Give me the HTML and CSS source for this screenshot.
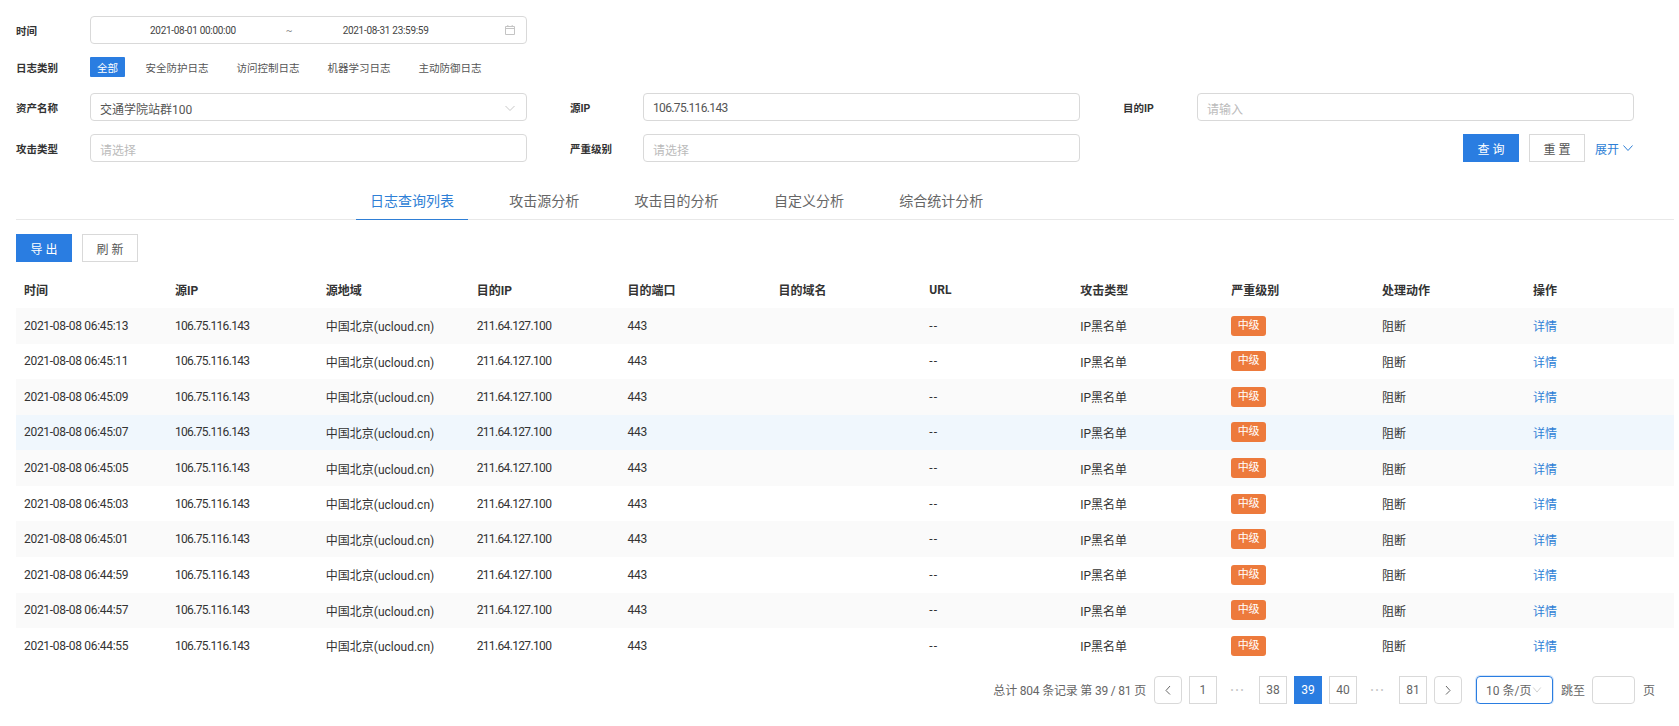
FILE: index.html
```html
<!DOCTYPE html>
<html lang="zh-CN">
<head>
    <meta charset="UTF-8">
    <title>日志查询</title>
    <link rel="stylesheet" href="styles.css">
</head>
<body>
<div class="page">
    <div class="filter-row row-time">
        <span class="label">时间</span>
        <div class="box date-box">
            <span class="date-val">2021-08-01 00:00:00</span>
            <span class="date-sep">~</span>
            <span class="date-val">2021-08-31 23:59:59</span>
            <svg class="date-icon" viewBox="0 0 12 12" width="12" height="12"><path d="M1.5 2.5h9v8h-9zM1.5 4.5h9M3.8 1v2M8.2 1v2" fill="none" stroke="#c4c4c4" stroke-width="1"/></svg>
        </div>
    </div>
    <div class="filter-row row-type">
        <span class="label">日志类别</span>
        <span class="type-item active">全部</span>
        <span class="type-item">安全防护日志</span>
        <span class="type-item">访问控制日志</span>
        <span class="type-item">机器学习日志</span>
        <span class="type-item">主动防御日志</span>
    </div>
    <div class="filter-grid">
        <span class="label">资产名称</span>
        <div class="box select-box">交通学院站群100
            <svg class="chevron" viewBox="0 0 12 12" width="12" height="12"><path d="M1.5 4l4.500 4.500L10.500 4" fill="none" stroke="#c8c8c8" stroke-width="1"/></svg>
        </div>
        <span class="label col-two">源IP</span>
        <div class="box ip-val">106.75.116.143</div>
        <span class="label col-three">目的IP</span>
        <div class="box holder">请输入</div>

        <span class="label">攻击类型</span>
        <div class="box holder">请选择</div>
        <span class="label col-two">严重级别</span>
        <div class="box holder">请选择</div>
        <div class="actions">
            <button class="btn primary">查 询</button>
            <button class="btn">重 置</button>
            <a class="expand">展开<svg viewBox="0 0 12 12" width="12" height="12"><path d="M1.500 3.500L6 8.500l4.500-5" fill="none" stroke="#2f7fd6" stroke-width="1"/></svg></a>
        </div>
    </div>

    <div class="tabs">
        <span class="tab active">日志查询列表</span>
        <span class="tab">攻击源分析</span>
        <span class="tab">攻击目的分析</span>
        <span class="tab">自定义分析</span>
        <span class="tab">综合统计分析</span>
    </div>

    <div class="toolbar">
        <button class="btn primary">导 出</button>
        <button class="btn">刷 新</button>
    </div>

    <table class="log-table">
        <thead>
        <tr><th>时间</th><th>源IP</th><th>源地域</th><th>目的IP</th><th>目的端口</th><th>目的域名</th><th>URL</th><th>攻击类型</th><th>严重级别</th><th>处理动作</th><th>操作</th></tr>
        </thead>
        <tbody>
        <tr><td class="time">2021-08-08 06:45:13</td><td class="ip-val">106.75.116.143</td><td>中国北京(ucloud.cn)</td><td class="ip-val">211.64.127.100</td><td class="time">443</td><td></td><td class="dash">--</td><td>IP黑名单</td><td><span class="tag">中级</span></td><td>阻断</td><td><a class="link">详情</a></td></tr>
        <tr><td class="time">2021-08-08 06:45:11</td><td class="ip-val">106.75.116.143</td><td>中国北京(ucloud.cn)</td><td class="ip-val">211.64.127.100</td><td class="time">443</td><td></td><td class="dash">--</td><td>IP黑名单</td><td><span class="tag">中级</span></td><td>阻断</td><td><a class="link">详情</a></td></tr>
        <tr><td class="time">2021-08-08 06:45:09</td><td class="ip-val">106.75.116.143</td><td>中国北京(ucloud.cn)</td><td class="ip-val">211.64.127.100</td><td class="time">443</td><td></td><td class="dash">--</td><td>IP黑名单</td><td><span class="tag">中级</span></td><td>阻断</td><td><a class="link">详情</a></td></tr>
        <tr class="hover"><td class="time">2021-08-08 06:45:07</td><td class="ip-val">106.75.116.143</td><td>中国北京(ucloud.cn)</td><td class="ip-val">211.64.127.100</td><td class="time">443</td><td></td><td class="dash">--</td><td>IP黑名单</td><td><span class="tag">中级</span></td><td>阻断</td><td><a class="link">详情</a></td></tr>
        <tr><td class="time">2021-08-08 06:45:05</td><td class="ip-val">106.75.116.143</td><td>中国北京(ucloud.cn)</td><td class="ip-val">211.64.127.100</td><td class="time">443</td><td></td><td class="dash">--</td><td>IP黑名单</td><td><span class="tag">中级</span></td><td>阻断</td><td><a class="link">详情</a></td></tr>
        <tr><td class="time">2021-08-08 06:45:03</td><td class="ip-val">106.75.116.143</td><td>中国北京(ucloud.cn)</td><td class="ip-val">211.64.127.100</td><td class="time">443</td><td></td><td class="dash">--</td><td>IP黑名单</td><td><span class="tag">中级</span></td><td>阻断</td><td><a class="link">详情</a></td></tr>
        <tr><td class="time">2021-08-08 06:45:01</td><td class="ip-val">106.75.116.143</td><td>中国北京(ucloud.cn)</td><td class="ip-val">211.64.127.100</td><td class="time">443</td><td></td><td class="dash">--</td><td>IP黑名单</td><td><span class="tag">中级</span></td><td>阻断</td><td><a class="link">详情</a></td></tr>
        <tr><td class="time">2021-08-08 06:44:59</td><td class="ip-val">106.75.116.143</td><td>中国北京(ucloud.cn)</td><td class="ip-val">211.64.127.100</td><td class="time">443</td><td></td><td class="dash">--</td><td>IP黑名单</td><td><span class="tag">中级</span></td><td>阻断</td><td><a class="link">详情</a></td></tr>
        <tr><td class="time">2021-08-08 06:44:57</td><td class="ip-val">106.75.116.143</td><td>中国北京(ucloud.cn)</td><td class="ip-val">211.64.127.100</td><td class="time">443</td><td></td><td class="dash">--</td><td>IP黑名单</td><td><span class="tag">中级</span></td><td>阻断</td><td><a class="link">详情</a></td></tr>
        <tr><td class="time">2021-08-08 06:44:55</td><td class="ip-val">106.75.116.143</td><td>中国北京(ucloud.cn)</td><td class="ip-val">211.64.127.100</td><td class="time">443</td><td></td><td class="dash">--</td><td>IP黑名单</td><td><span class="tag">中级</span></td><td>阻断</td><td><a class="link">详情</a></td></tr>
        </tbody>
    </table>

    <div class="pager">
        <span class="total">总计 804 条记录 第 39 / 81 页</span>
        <span class="pg round"><svg viewBox="0 0 12 12" width="12" height="12"><path d="M8 2L4 6.500l4 4" fill="none" stroke="#666" stroke-width="1"/></svg></span>
        <span class="pg">1</span>
        <span class="dots">•••</span>
        <span class="pg">38</span>
        <span class="pg current">39</span>
        <span class="pg">40</span>
        <span class="dots">•••</span>
        <span class="pg">81</span>
        <span class="pg round"><svg viewBox="0 0 12 12" width="12" height="12"><path d="M4 2l4 4.500-4 4" fill="none" stroke="#666" stroke-width="1"/></svg></span>
        <span class="size-select">10 条/页<svg viewBox="0 0 12 12" width="10" height="10"><path d="M1.500 3l4.500 5.500L10.500 3" fill="none" stroke="#c8c8c8" stroke-width="1"/></svg></span>
        <span class="jump">跳至</span>
        <span class="jump-input"></span>
        <span class="jump-end">页</span>
    </div>
</div>
</body>
</html>
```

FILE: styles.css
```css
* {
    margin: 0;
    padding: 0;
    box-sizing: border-box;
    font-family: Roboto, 'Noto Sans CJK SC', sans-serif;
}

body {
    background: #fff;
    color: #333;
    font-size: 12px;
    overflow: hidden;
}

.page {
    padding: 16px 5px 0 16px;
}

.label {
    font-size: 10.5px;
    font-weight: 700;
    color: #333;
}

.filter-row {
    display: flex;
    align-items: center;
}

.filter-row .label {
    width: 74px;
    flex: none;
}

.box {
    display: flex;
    align-items: center;
    height: 28px;
    padding: 2px 10px 0 9px;
    border: 1px solid #d9d9d9;
    border-radius: 4px;
    color: #555;
}

.holder {
    color: #bbb;
}

.date-box {
    width: 437px;
    padding: 0 10px;
    font-size: 10px;
    color: #444;
}

.date-val {
    letter-spacing: -0.3px;
}

.date-val:first-child {
    margin-left: 49px;
}

.date-sep {
    margin: 0 50px 0 50px;
    color: #888;
}

.date-icon {
    margin-left: auto;
}

.row-type {
    margin-top: 13px;
    height: 20px;
}

.type-item {
    font-size: 10.5px;
    color: #555;
    margin-right: 28px;
}

.type-item.active {
    display: flex;
    align-items: center;
    height: 20px;
    padding: 0 7px;
    margin-right: 20.500px;
    background: #2a7de1;
    color: #fff;
    border-radius: 1px;
}

.filter-grid {
    display: grid;
    grid-template-columns: 74px 437px 43px 73px 437px 43px 74px 437px;
    grid-template-rows: 28px 28px;
    row-gap: 13px;
    align-items: center;
    margin-top: 16px;
}

.col-two {
    grid-column: 4;
}

.col-three {
    grid-column: 7;
}

.select-box {
    justify-content: space-between;
}

.actions {
    grid-column: 6 / 9;
    display: flex;
    align-items: center;
    justify-content: flex-end;
}

.btn {
    width: 56px;
    height: 28px;
    border: 1px solid #d9d9d9;
    background: #fff;
    color: #555;
    font-size: 12px;
    cursor: pointer;
}

.btn.primary {
    background: #2a7de1;
    border-color: #2a7de1;
    color: #fff;
}

.actions .btn {
    margin-right: 10px;
}

.expand {
    display: flex;
    align-items: center;
    color: #2f7fd6;
    font-size: 12px;
}

.expand svg {
    margin-left: 3px;
}

.tabs {
    display: flex;
    margin-top: 22px;
    padding-left: 340px;
    border-bottom: 1px solid #e8e8e8;
}

.tab {
    height: 36px;
    line-height: 34px;
    padding: 0 14px;
    margin-right: 27.300px;
    margin-bottom: -1px;
    font-size: 14px;
    color: #666;
}

.tab.active {
    color: #2f7fd6;
    border-bottom: 1px solid #2f7fd6;
}

.toolbar {
    display: flex;
    gap: 10px;
    margin-top: 14px;
}

.log-table {
    width: 1658px;
    margin-top: 9px;
    border-collapse: collapse;
    table-layout: fixed;
}

.log-table th {
    height: 37px;
    padding: 0 8px;
    text-align: left;
    font-size: 12px;
    font-weight: 700;
    color: #333;
}

.log-table th:last-child {
    width: 149px;
}

.log-table td {
    height: 35.570px;
    padding: 0 8px;
    color: #333;
    white-space: nowrap;
}

.log-table td.time {
    letter-spacing: -0.3px;
}

.log-table td.dash {
    letter-spacing: 1px;
}

.ip-val,
.log-table td.ip-val {
    letter-spacing: -0.650px;
}

.log-table tbody tr:nth-child(odd) {
    background: #fafafa;
}

.log-table tbody tr.hover {
    background: #f0f7fd;
}

.tag {
    display: inline-block;
    width: 35px;
    height: 20px;
    line-height: 20px;
    text-align: center;
    background: #ed7a3c;
    color: #fff;
    font-size: 11px;
    border-radius: 3px;
    vertical-align: middle;
}

.link {
    color: #2f7fd6;
}

.pager {
    display: flex;
    align-items: center;
    justify-content: flex-end;
    margin-top: 12px;
    padding-right: 19px;
    color: #666;
}

.total {
    letter-spacing: -0.2px;
    margin-right: 8px;
}

.pg {
    display: flex;
    align-items: center;
    justify-content: center;
    width: 28px;
    height: 28px;
    margin-right: 7px;
    border: 1px solid #d9d9d9;
    color: #666;
}

.pg.round {
    border-radius: 4px;
}

.pg.current {
    background: #2a7de1;
    border-color: #2a7de1;
    color: #fff;
}

.dots {
    width: 28px;
    margin-right: 7px;
    text-align: center;
    color: #c4c4c4;
    font-size: 9px;
    letter-spacing: 2px;
    white-space: nowrap;
}

.size-select {
    display: flex;
    align-items: center;
    gap: 1px;
    width: 77px;
    height: 28px;
    margin-left: 7px;
    padding: 0 0 0 9px;
    border: 1px solid #2a7de1;
    border-radius: 4px;
    box-shadow: 0 0 0 1px rgba(42, 125, 225, 0.2);
}

.jump {
    margin-left: 8px;
}

.jump-input {
    width: 43px;
    height: 28px;
    margin-left: 7px;
    border: 1px solid #d9d9d9;
    border-radius: 4px;
}

.jump-end {
    margin-left: 8px;
}
```
